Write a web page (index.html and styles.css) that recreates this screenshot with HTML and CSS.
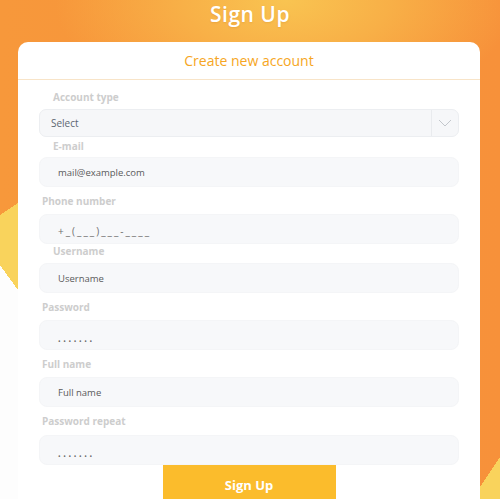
FILE: index.html
```html
<!DOCTYPE html>
<html lang="en">
<head>
<meta charset="utf-8">
<title>Sign Up</title>
<link rel="stylesheet" href="styles.css">
</head>
<body>
<div class="page">
  <h1 class="title">Sign Up</h1>
  <div class="card">
    <div class="card-head">Create new account</div>
    <form class="form">
      <div class="label label--in label--first">Account type</div>
      <div class="select">
        <span class="select-value">Select</span>
        <span class="select-arrow">
          <svg width="14" height="8" viewBox="0 0 14 8"><path d="M1 1 L7 7 L13 1" fill="none" stroke="#c3c7cc" stroke-width="1"/></svg>
        </span>
      </div>
      <div class="label label--in label--short">E-mail</div>
      <div class="input">mail@example.com</div>
      <div class="label label--mid">Phone number</div>
      <div class="input input--low input--mask">+_(___)___-____</div>
      <div class="label label--in label--tiny">Username</div>
      <div class="input">Username</div>
      <div class="label label--mid">Password</div>
      <div class="input input--dots">•••••••</div>
      <div class="label label--mid">Full name</div>
      <div class="input">Full name</div>
      <div class="label label--wide">Password repeat</div>
      <div class="input input--dots">•••••••</div>
      <button type="button" class="btn">Sign Up</button>
    </form>
  </div>
</div>
</body>
</html>
```
FILE: styles.css
```css
* { box-sizing: border-box; }
html, body { margin: 0; padding: 0; }
body { font-family: "Open Sans", "Liberation Sans", sans-serif; }

.page {
  width: 500px;
  height: 499px;
  overflow: hidden;
  display: flex;
  flex-direction: column;
  background:
    linear-gradient(234deg, transparent 57.8%, #fdfdfd 57.8%) left top / 40px 100% no-repeat,
    linear-gradient(146.3deg, transparent 40.9%, #f9d35c 40.9%) left top / 40px 100% no-repeat,
    linear-gradient(123.7deg, transparent 92.5%, #f9d35c 92.5%) right top / 40px 100% no-repeat,
    radial-gradient(ellipse 230px 120px at 285px 0, #f9c451 0%, #f8b047 45%, rgba(247, 146, 58, 0) 100%),
    linear-gradient(to right, #f7983b, #f7913a);
}

.title {
  margin: 0;
  height: 28px;
  line-height: 28px;
  text-align: center;
  color: #fff;
  font-size: 21px;
  font-weight: 600;
  letter-spacing: 0.5px;
  text-shadow: 0 1px 2px rgba(160, 80, 0, 0.15);
}

.card {
  margin: 14px 20px 0 18px;
  flex: 1 0 auto;
  background: #fff;
  border-radius: 10px 10px 0 0;
}

.card-head {
  height: 38px;
  display: flex;
  align-items: center;
  justify-content: center;
  padding-bottom: 1px;
  color: #f6a623;
  font-size: 14px;
  border-bottom: 1px solid #f8e4c8;
}

.form {
  display: flex;
  flex-direction: column;
  padding: 0 21px;
}

.label {
  display: flex;
  align-items: center;
  padding-left: 3px;
  font-size: 10px;
  font-weight: 700;
  color: #cdcdcd;
}
.label--in { padding-left: 14px; }
.label--first { height: 29px; padding-top: 5px; }
.label--short { height: 20px; padding-bottom: 2px; }
.label--mid { height: 27px; }
.label--tiny { height: 19px; padding-bottom: 5px; }
.label--wide { height: 28px; }

.select {
  height: 28px;
  display: flex;
  align-items: stretch;
  background: #f6f7f9;
  border: 1px solid #eceef1;
  border-radius: 7px;
}
.select-value {
  flex: 1;
  display: flex;
  align-items: center;
  padding-left: 11px;
  font-size: 10px;
  color: #5d6671;
}
.select-arrow {
  width: 27px;
  display: flex;
  align-items: center;
  justify-content: center;
  border-left: 1px solid #e9ebee;
}

.input {
  height: 30px;
  display: flex;
  align-items: center;
  padding: 0 18px;
  background: #f7f8fa;
  border: 1px solid #f4f5f7;
  border-radius: 8px;
  font-size: 9.5px;
  color: #5a5a5a;
}
.input--low { padding-top: 4px; }
.input--mask { color: #6f6f6f; letter-spacing: 2px; font-size: 10px; }
.input--dots {
  align-items: flex-end;
  padding-bottom: 3px;
  font-size: 7px;
  letter-spacing: 2.6px;
  color: #6d6d6d;
}

.btn {
  align-self: center;
  width: 173px;
  height: 40px;
  margin: 0;
  border: none;
  background: #fbbc2c;
  color: #fff;
  font-family: "Open Sans", "Liberation Sans", sans-serif;
  font-size: 13px;
  font-weight: 700;
}
```
